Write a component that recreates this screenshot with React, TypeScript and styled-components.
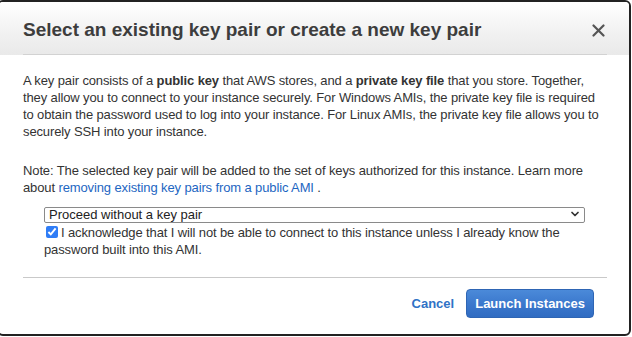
import React, { useState } from 'react';
import styled, { createGlobalStyle } from 'styled-components';
import { ChevronDown } from 'lucide-react';

const GlobalStyle = createGlobalStyle`
  html, body {
    margin: 0;
    padding: 0;
    background: #fff;
    overflow: hidden;
  }
  body {
    font-family: 'Liberation Sans', Arial, Helvetica, sans-serif;
    color: #333;
  }
`;

const App = () => {
  const [keyPair, setKeyPair] = useState('none');
  const [acknowledged, setAcknowledged] = useState(true);

  return (
    <>
      <GlobalStyle />
      <Modal>
        <Header>
          <HeaderInner>
            <Title>Select an existing key pair or create a new key pair</Title>
            <CloseButton aria-label='Close'>
              <svg width='13' height='13' viewBox='0 0 13 13'>
                <path d='M1.5 1.5 L11.5 11.5 M11.5 1.5 L1.5 11.5' stroke='#555' strokeWidth='2.2' strokeLinecap='round' />
              </svg>
            </CloseButton>
          </HeaderInner>
        </Header>
        <Body>
          <Paragraph>
            A key pair consists of a <b>public key</b> that AWS stores, and a <b>private key file</b> that you store.
            Together, they allow you to connect to your instance securely. For Windows AMIs, the private key file is
            required to obtain the password used to log into your instance. For Linux AMIs, the private key file allows
            you to securely SSH into your instance.
          </Paragraph>
          <Paragraph>
            Note: The selected key pair will be added to the set of keys authorized for this instance. Learn more
            about <Link href='#'>removing existing key pairs from a public AMI</Link> .
          </Paragraph>
          <Options>
            <SelectWrap>
              <Select value={keyPair} onChange={(e) => setKeyPair(e.target.value)}>
                <option value='none'>Proceed without a key pair</option>
                <option value='existing'>Choose an existing key pair</option>
                <option value='new'>Create a new key pair</option>
              </Select>
              <Chevron>
                <ChevronDown size={12} strokeWidth={3.5} />
              </Chevron>
            </SelectWrap>
            <Acknowledge>
              <Checkbox
                type='checkbox'
                checked={acknowledged}
                onChange={(e) => setAcknowledged(e.target.checked)}
              />
              I acknowledge that I will not be able to connect to this instance unless I already know the password
              built into this AMI.
            </Acknowledge>
          </Options>
        </Body>
        <Footer>
          <FooterInner>
            <CancelLink href='#'>Cancel</CancelLink>
            <PrimaryButton disabled={!acknowledged}>Launch Instances</PrimaryButton>
          </FooterInner>
        </Footer>
      </Modal>
    </>
  );
};

export default App;

const Modal = styled.div`
  box-sizing: border-box;
  width: 634px;
  height: 336px;
  margin-left: -3px;
  border: 2px solid #222;
  border-radius: 6px;
  background: #fff;
  display: flex;
  flex-direction: column;
  overflow: hidden;
`;

const Header = styled.div`
  padding: 0 22px 0 24px;
  background: linear-gradient(to bottom, #ffffff 0%, #f1f1f1 60%, #e9e9e9 100%);
`;

const HeaderInner = styled.div`
  height: 53px;
  box-sizing: border-box;
  padding-top: 4px;
  display: flex;
  align-items: center;
  justify-content: space-between;
  border-bottom: 1px solid #d2d2d2;
`;

const Title = styled.h2`
  margin: 0;
  font-size: 19px;
  font-weight: bold;
  color: #3d3d3d;
`;

const CloseButton = styled.button`
  display: flex;
  align-items: center;
  padding: 0;
  margin-right: 2px;
  border: none;
  background: none;
  cursor: pointer;
`;

const Body = styled.div`
  padding: 17px 22px 0 24px;
  font-size: 13px;
  line-height: 17px;
  letter-spacing: -0.12px;
`;

const Paragraph = styled.p`
  margin: 0 0 22px;
`;

const Link = styled.a`
  color: #1d66c2;
  text-decoration: none;
`;

const Options = styled.div`
  margin-top: -12px;
  padding-left: 21px;
  padding-right: 22px;
`;

const SelectWrap = styled.div`
  position: relative;
`;

const Select = styled.select`
  box-sizing: border-box;
  width: 100%;
  height: 16px;
  padding: 0 4px;
  border: 1px solid #8a8a8a;
  border-radius: 2px;
  background: #fff;
  appearance: none;
  font-family: 'Liberation Sans', Arial, sans-serif;
  font-size: 13px;
  line-height: 14px;
  color: #222;
`;

const Chevron = styled.span`
  position: absolute;
  right: 4px;
  top: 2px;
  display: flex;
  color: #333;
  pointer-events: none;
`;

const Acknowledge = styled.label`
  display: block;
  margin-top: 1px;
  font-size: 13px;
  line-height: 17px;
  color: #333;
`;

const Checkbox = styled.input`
  width: 12px;
  height: 12px;
  margin: 0 3px 0 2px;
  vertical-align: -1px;
  accent-color: #2f7df6;
`;

const Footer = styled.div`
  margin-top: auto;
  padding: 0 22px 0 24px;
  height: 57px;
`;

const FooterInner = styled.div`
  height: 100%;
  box-sizing: border-box;
  border-top: 1px solid #c9c9c9;
  display: flex;
  align-items: center;
  justify-content: flex-end;
  gap: 12px;
  padding: 0 13px 6px 0;
`;

const CancelLink = styled.a`
  font-size: 13px;
  font-weight: bold;
  color: #2f72c6;
  text-decoration: none;
`;

const PrimaryButton = styled.button`
  height: 29px;
  padding: 0 8px;
  border: 1px solid #2e65b4;
  border-radius: 4px;
  background: linear-gradient(to bottom, #4b8ad9 0%, #3a77cc 55%, #306cc2 100%);
  color: #fff;
  font-family: 'Liberation Sans', Arial, sans-serif;
  font-size: 13px;
  font-weight: bold;
  cursor: pointer;

  &:disabled {
    opacity: 0.6;
  }
`;
